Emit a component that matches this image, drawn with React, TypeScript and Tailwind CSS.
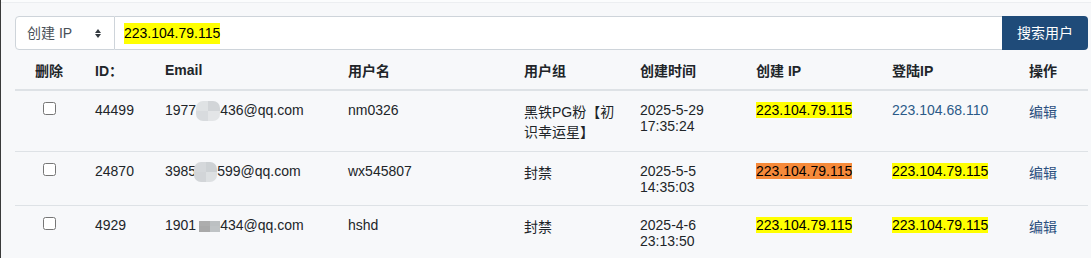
import React from "react";

type Patch = { w: number; h: number; ml: number; rounded: boolean; colors: string[] };

function BlurPatch({ p }: { p: Patch }) {
  return (
    <span
      className={`inline-grid grid-cols-2 grid-rows-2 align-middle overflow-hidden -my-[4px] ${p.rounded ? "rounded-[7px]" : ""}`}
      style={{ width: p.w, height: p.h, marginLeft: p.ml }}
    >
      {p.colors.map((c, i) => (
        <span key={i} style={{ background: c }} />
      ))}
    </span>
  );
}

const rows = [
  {
    id: "44499",
    pre: "1977",
    post: "436@qq.com",
    patch: { w: 24, h: 20, ml: 0, rounded: true, colors: ["#dfe2e4", "#d2d5d8", "#d8dbde", "#e3e5e7"] },
    name: "nm0326",
    group: "黑铁PG粉【初识幸运星】",
    d1: "2025-5-29",
    d2: "17:35:24",
    cip: "yellow",
    lip: "223.104.68.110",
    lipHi: false,
  },
  {
    id: "24870",
    pre: "3985",
    post: "599@qq.com",
    patch: { w: 23, h: 20, ml: -2, rounded: true, colors: ["#d5d8db", "#cdd1d4", "#d2d5d8", "#dde0e2"] },
    name: "wx545807",
    group: "封禁",
    d1: "2025-5-5",
    d2: "14:35:03",
    cip: "orange",
    lip: "223.104.79.115",
    lipHi: true,
  },
  {
    id: "4929",
    pre: "1901",
    post: "434@qq.com",
    patch: { w: 21, h: 11, ml: 3, rounded: false, colors: ["#adadad", "#bcc0c2", "#a9a9a9", "#bfc3c5"] },
    name: "hshd",
    group: "封禁",
    d1: "2025-4-6",
    d2: "23:13:50",
    cip: "yellow",
    lip: "223.104.79.115",
    lipHi: true,
  },
];

const th = "text-left font-bold pt-[10px] pb-[9px] px-[12px] border-b-2 border-[#dee2e6] align-middle";
const td = "align-top pt-[10px] pb-[10px] px-[12px] border-b border-[#dee2e6]";
const tdl = "align-top pt-[11px] pb-[10px] px-[12px] border-b border-[#dee2e6]";

export default function App() {
  return (
    <div className="w-[1091px] h-[258px] overflow-hidden bg-[#f7f8fa] border-l border-[#3a3a3a] font-['Liberation_Sans','Noto_Sans_CJK_SC',sans-serif] text-[14px] text-[#212529]">
      <div className="h-[3px] bg-[#fbfcfd] border-b border-[#eceef1]" />
      <div className="pl-[14px] pt-[13px]">
        <div className="flex h-[34px] w-[1073px]">
          <div className="w-[100px] flex items-center justify-between bg-white border border-[#ced4da] rounded-l-[4px] pl-[11px] pr-[13px] text-[#495057]">
            <span>创建 IP</span>
            <svg width="6" height="9" viewBox="0 0 6 9">
              <path d="M0 4 L3 0 L6 4 Z M0 5 L3 9 L6 5 Z" fill="#343a40" />
            </svg>
          </div>
          <div className="flex-1 flex items-center bg-white border-y border-[#ced4da] pl-[9px] text-black">
            <span className="bg-[#ffff00]">223.104.79.115</span>
          </div>
          <div className="w-[86px] flex items-center justify-center bg-[#1f4b79] text-white rounded-r-[4px]">
            搜索用户
          </div>
        </div>
        <table className="table-fixed w-[1073px] leading-[normal]">
          <colgroup>
            <col className="w-[68px]" />
            <col className="w-[70px]" />
            <col className="w-[183px]" />
            <col className="w-[176px]" />
            <col className="w-[116px]" />
            <col className="w-[116px]" />
            <col className="w-[136px]" />
            <col className="w-[137px]" />
            <col className="w-[71px]" />
          </colgroup>
          <thead>
            <tr>
              <th className={`${th} !text-center`}>删除</th>
              <th className={th}>ID：</th>
              <th className={th}>Email</th>
              <th className={th}>用户名</th>
              <th className={th}>用户组</th>
              <th className={th}>创建时间</th>
              <th className={th}>创建 IP</th>
              <th className={th}>登陆IP</th>
              <th className={th}>操作</th>
            </tr>
          </thead>
          <tbody>
            {rows.map((r) => (
              <tr key={r.id}>
                <td className={`${td} text-center`}>
                  <input type="checkbox" className="block mx-auto mt-px mb-0" />
                </td>
                <td className={tdl}>{r.id}</td>
                <td className={`${tdl} whitespace-nowrap`}>
                  {r.pre}
                  <BlurPatch p={r.patch} />
                  {r.post}
                </td>
                <td className={tdl}>{r.name}</td>
                <td className={td}>{r.group}</td>
                <td className={tdl}>
                  {r.d1}
                  <br />
                  {r.d2}
                </td>
                <td className={tdl}>
                  <span className={r.cip === "yellow" ? "bg-[#ffff00] text-black" : "bg-[#f68a3a] text-black"}>
                    223.104.79.115
                  </span>
                </td>
                <td className={tdl}>
                  {r.lipHi ? (
                    <span className="bg-[#ffff00] text-black">{r.lip}</span>
                  ) : (
                    <span className="text-[#2b5a88]">{r.lip}</span>
                  )}
                </td>
                <td className={`${td} text-[#2b4f7e]`}>编辑</td>
              </tr>
            ))}
          </tbody>
        </table>
      </div>
    </div>
  );
}
